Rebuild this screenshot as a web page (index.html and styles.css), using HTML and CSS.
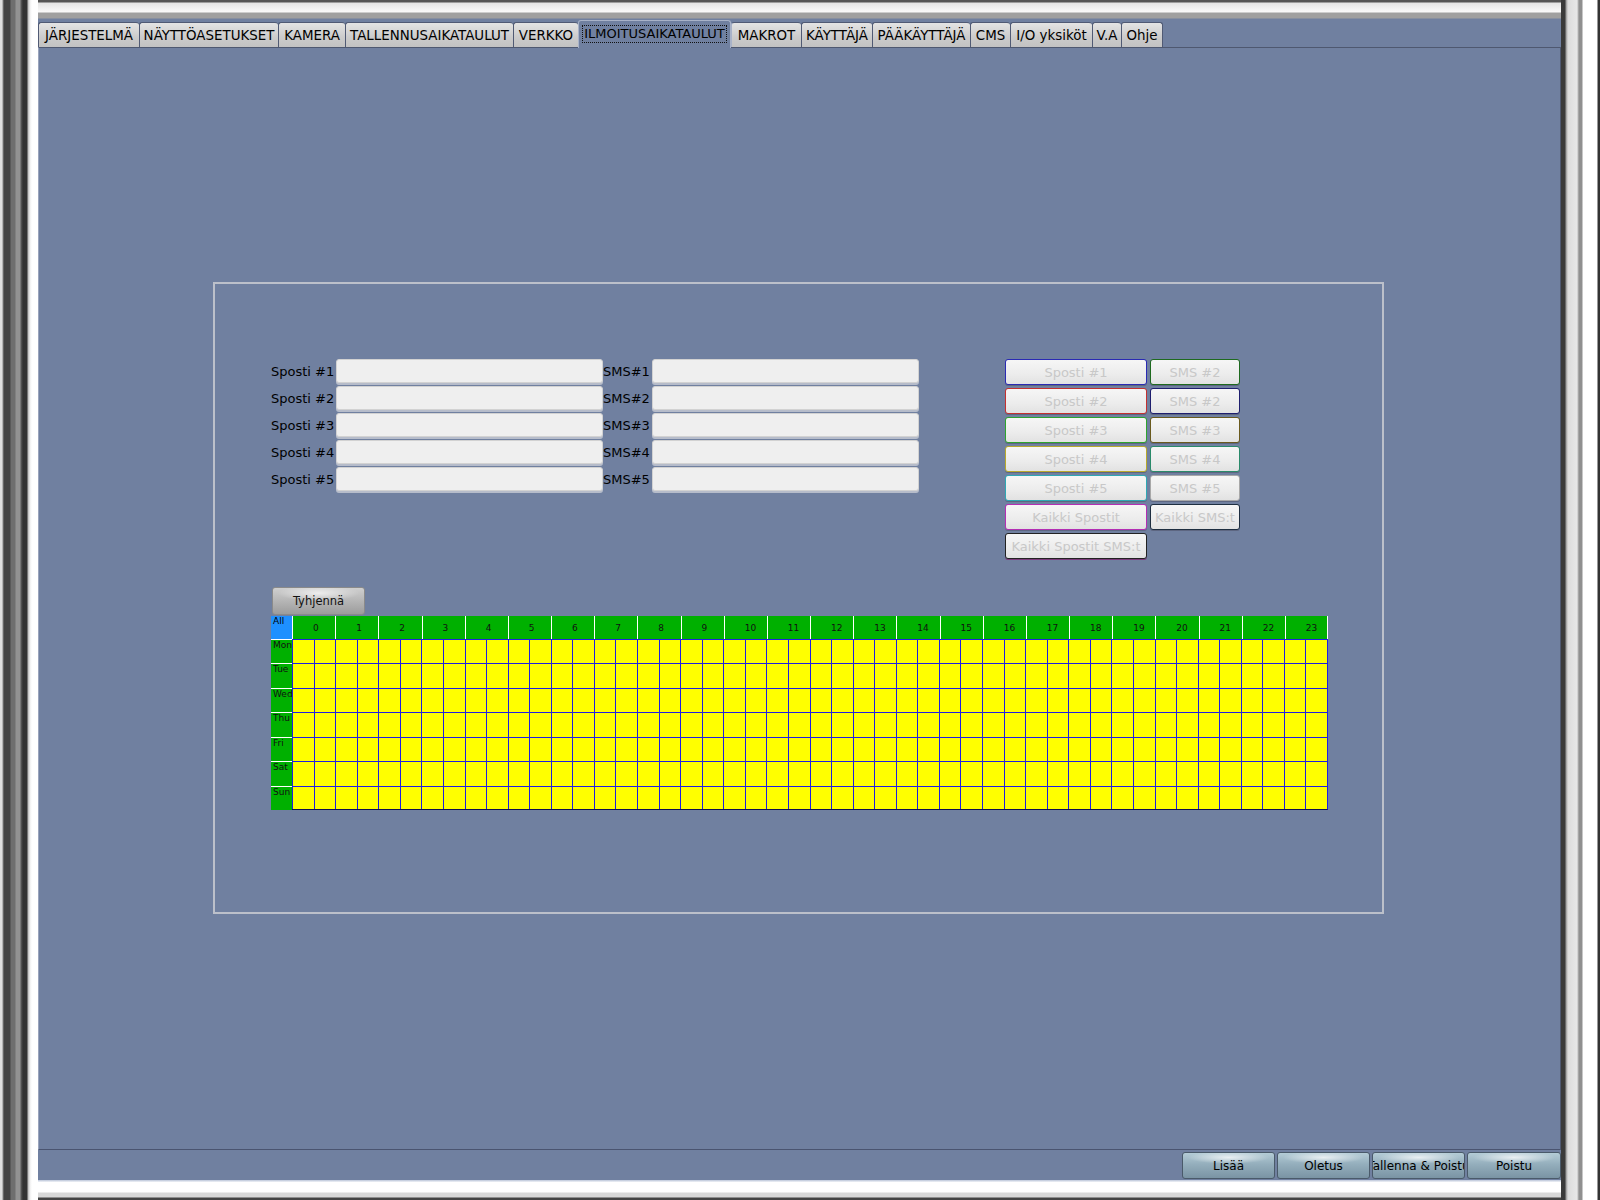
FILE: index.html
```html
<!DOCTYPE html>
<html lang="fi">
<head>
<meta charset="utf-8">
<title>Ilmoitusaikataulut</title>
<link rel="stylesheet" href="styles.css">
</head>
<body>
<div class="frame">
  <div class="window">
    <div class="tabs">
      <div class="tab tab-sys">JÄRJESTELMÄ</div>
      <div class="tab tab-disp">NÄYTTÖASETUKSET</div>
      <div class="tab tab-cam">KAMERA</div>
      <div class="tab tab-rec">TALLENNUSAIKATAULUT</div>
      <div class="tab tab-net">VERKKO</div>
      <div class="tab tab-alarm active"><span class="focus">ILMOITUSAIKATAULUT</span></div>
      <div class="tab tab-macro">MAKROT</div>
      <div class="tab tab-user">KÄYTTÄJÄ</div>
      <div class="tab tab-admin">PÄÄKÄYTTÄJÄ</div>
      <div class="tab tab-cms">CMS</div>
      <div class="tab tab-io">I/O yksiköt</div>
      <div class="tab tab-va">V.A</div>
      <div class="tab tab-help">Ohje</div>
    </div>
    <div class="panel">
      <div class="box">
        <div class="top">
          <div class="form">
            <div class="lbl">Sposti #1</div><div class="field"></div><div class="lbl">SMS#1</div><div class="field"></div>
            <div class="lbl">Sposti #2</div><div class="field"></div><div class="lbl">SMS#2</div><div class="field"></div>
            <div class="lbl">Sposti #3</div><div class="field"></div><div class="lbl">SMS#3</div><div class="field"></div>
            <div class="lbl">Sposti #4</div><div class="field"></div><div class="lbl">SMS#4</div><div class="field"></div>
            <div class="lbl">Sposti #5</div><div class="field"></div><div class="lbl">SMS#5</div><div class="field"></div>
          </div>
          <div class="btns">
            <div class="b c-blue">Sposti #1</div><div class="b c-dgreen">SMS #2</div>
            <div class="b c-red">Sposti #2</div><div class="b c-navy">SMS #2</div>
            <div class="b c-green">Sposti #3</div><div class="b c-olive">SMS #3</div>
            <div class="b c-yellow">Sposti #4</div><div class="b c-teal">SMS #4</div>
            <div class="b c-cyan">Sposti #5</div><div class="b c-gray">SMS #5</div>
            <div class="b c-magenta">Kaikki Spostit</div><div class="b c-slate">Kaikki SMS:t</div>
            <div class="b c-black">Kaikki Spostit SMS:t</div>
          </div>
        </div>
        <div class="clear">Tyhjennä</div>
        <div class="sched">
          <div class="hdr">
            <div class="all">All</div>
            <div class="hr">0</div><div class="hr">1</div><div class="hr">2</div><div class="hr">3</div><div class="hr">4</div><div class="hr">5</div>
            <div class="hr">6</div><div class="hr">7</div><div class="hr">8</div><div class="hr">9</div><div class="hr">10</div><div class="hr">11</div>
            <div class="hr">12</div><div class="hr">13</div><div class="hr">14</div><div class="hr">15</div><div class="hr">16</div><div class="hr">17</div>
            <div class="hr">18</div><div class="hr">19</div><div class="hr">20</div><div class="hr">21</div><div class="hr">22</div><div class="hr">23</div>
          </div>
          <div class="row"><div class="day">Mon</div><div class="cells"><i></i><i></i><i></i><i></i><i></i><i></i><i></i><i></i><i></i><i></i><i></i><i></i><i></i><i></i><i></i><i></i><i></i><i></i><i></i><i></i><i></i><i></i><i></i><i></i><i></i><i></i><i></i><i></i><i></i><i></i><i></i><i></i><i></i><i></i><i></i><i></i><i></i><i></i><i></i><i></i><i></i><i></i><i></i><i></i><i></i><i></i><i></i><i></i></div></div>
          <div class="row"><div class="day">Tue</div><div class="cells"><i></i><i></i><i></i><i></i><i></i><i></i><i></i><i></i><i></i><i></i><i></i><i></i><i></i><i></i><i></i><i></i><i></i><i></i><i></i><i></i><i></i><i></i><i></i><i></i><i></i><i></i><i></i><i></i><i></i><i></i><i></i><i></i><i></i><i></i><i></i><i></i><i></i><i></i><i></i><i></i><i></i><i></i><i></i><i></i><i></i><i></i><i></i><i></i></div></div>
          <div class="row"><div class="day">Wed</div><div class="cells"><i></i><i></i><i></i><i></i><i></i><i></i><i></i><i></i><i></i><i></i><i></i><i></i><i></i><i></i><i></i><i></i><i></i><i></i><i></i><i></i><i></i><i></i><i></i><i></i><i></i><i></i><i></i><i></i><i></i><i></i><i></i><i></i><i></i><i></i><i></i><i></i><i></i><i></i><i></i><i></i><i></i><i></i><i></i><i></i><i></i><i></i><i></i><i></i></div></div>
          <div class="row"><div class="day">Thu</div><div class="cells"><i></i><i></i><i></i><i></i><i></i><i></i><i></i><i></i><i></i><i></i><i></i><i></i><i></i><i></i><i></i><i></i><i></i><i></i><i></i><i></i><i></i><i></i><i></i><i></i><i></i><i></i><i></i><i></i><i></i><i></i><i></i><i></i><i></i><i></i><i></i><i></i><i></i><i></i><i></i><i></i><i></i><i></i><i></i><i></i><i></i><i></i><i></i><i></i></div></div>
          <div class="row"><div class="day">Fri</div><div class="cells"><i></i><i></i><i></i><i></i><i></i><i></i><i></i><i></i><i></i><i></i><i></i><i></i><i></i><i></i><i></i><i></i><i></i><i></i><i></i><i></i><i></i><i></i><i></i><i></i><i></i><i></i><i></i><i></i><i></i><i></i><i></i><i></i><i></i><i></i><i></i><i></i><i></i><i></i><i></i><i></i><i></i><i></i><i></i><i></i><i></i><i></i><i></i><i></i></div></div>
          <div class="row"><div class="day">Sat</div><div class="cells"><i></i><i></i><i></i><i></i><i></i><i></i><i></i><i></i><i></i><i></i><i></i><i></i><i></i><i></i><i></i><i></i><i></i><i></i><i></i><i></i><i></i><i></i><i></i><i></i><i></i><i></i><i></i><i></i><i></i><i></i><i></i><i></i><i></i><i></i><i></i><i></i><i></i><i></i><i></i><i></i><i></i><i></i><i></i><i></i><i></i><i></i><i></i><i></i></div></div>
          <div class="row last"><div class="day">Sun</div><div class="cells"><i></i><i></i><i></i><i></i><i></i><i></i><i></i><i></i><i></i><i></i><i></i><i></i><i></i><i></i><i></i><i></i><i></i><i></i><i></i><i></i><i></i><i></i><i></i><i></i><i></i><i></i><i></i><i></i><i></i><i></i><i></i><i></i><i></i><i></i><i></i><i></i><i></i><i></i><i></i><i></i><i></i><i></i><i></i><i></i><i></i><i></i><i></i><i></i></div></div>
        </div>
      </div>
    </div>
    <div class="footer">
      <div class="fb">Lisää</div>
      <div class="fb">Oletus</div>
      <div class="fb">Tallenna &amp; Poistu</div>
      <div class="fb wide">Poistu</div>
    </div>
  </div>
</div>
</body>
</html>
```
FILE: styles.css
```css
* { box-sizing: border-box; }
html, body { margin: 0; padding: 0; }
body {
  width: 1600px;
  height: 1200px;
  overflow: hidden;
  background: #fff;
  font-family: "DejaVu Sans", "Noto Sans", sans-serif;
  color: #000;
}

.frame {
  width: 1600px;
  height: 1200px;
  padding: 19px 39px 20px 38px;
  background:
    linear-gradient(90deg, #e0e0e0 0, #e0e0e0 2px, #8a8a8a 3px, #444 4px, #444 10px, #6e6e6e 11px, #6e6e6e 15px, #929292 16px, #929292 20px, #5a5a5a 21px, #333 23px, #333 27px, #bbb 28px, #f0f0f0 30px, #fff 32px, #fff 38px) left top / 38px 100% no-repeat,
    linear-gradient(90deg, #3a3a3a 0, #3a3a3a 4px, #999 5px, #dcdcdc 7px, #e8e8e8 16px, #909090 18px, #909090 21px, #fff 22px, #fff 36px, #333 37px) right top / 39px 100% no-repeat,
    linear-gradient(180deg, #555 0, #555 2px, #e4e4e4 3px, #fafafa 12px, #a0a0a0 13px, #a0a0a0 18px, #7080a0 19px) left top / 100% 19px no-repeat,
    linear-gradient(180deg, #c8d0e0 0, #c8d0e0 1px, #fff 2px, #fff 12px, #d8d8d8 13px, #d8d8d8 17px, #444 18px) left bottom / 100% 20px no-repeat,
    #fff;
}

.window {
  width: 1523px;
  height: 1161px;
  background: #7080a0;
  display: flex;
  flex-direction: column;
}

/* tabs */
.tabs {
  height: 28px;
  display: flex;
  align-items: flex-end;
  flex: 0 0 auto;
}
.tab {
  height: 25px;
  border: 1px solid #505a74;
  border-right: none;
  border-bottom: none;
  border-radius: 3px 3px 0 0;
  background: linear-gradient(#e4e4e4, #cbcbcb 60%, #c2c2c2);
  font-size: 13.4px;
  display: flex;
  align-items: center;
  justify-content: center;
  white-space: nowrap;
  flex: 0 0 auto;
}
.tab-help { border-right: 1px solid #505a74; }
.tab.active {
  height: 28px;
  margin-bottom: -1px;
  position: relative;
  z-index: 1;
  background: #7080a0;
  border: 1px solid #a8b2c8;
  border-bottom: none;
  padding-bottom: 2px;
}
.tab.active + .tab { border-left-color: #a8b2c8; }
.focus {
  border: 1px dotted #111;
  padding: 1px 1px;
  line-height: 14px;
  font-size: 13px;
}
.tab-sys { width: 101px; }
.tab-disp { width: 139px; }
.tab-cam { width: 67px; }
.tab-rec { width: 168px; }
.tab-net { width: 65px; }
.tab-alarm { width: 153px; }
.tab-macro { width: 70px; }
.tab-user { width: 71px; }
.tab-admin { width: 98px; }
.tab-cms { width: 40px; }
.tab-io { width: 82px; }
.tab-va { width: 29px; }
.tab-help { width: 42px; }

/* panel */
.panel {
  height: 1103px;
  flex: 0 0 auto;
  border-top: 1px solid #4e5870;
  border-left: 1px solid #9aa4bc;
  border-right: 1px solid #4e5870;
  border-bottom: 1px solid #4a5470;
  padding: 234px 0 0 174px;
}

.box {
  width: 1171px;
  height: 632px;
  border: 2px solid #bcc0ca;
  padding: 75px 0 0 56px;
}

.top {
  display: flex;
  align-items: flex-start;
  height: 200px;
}

.form {
  display: grid;
  grid-template-columns: 65px 267px 49px 267px;
  grid-auto-rows: 24px;
  row-gap: 3px;
}
.lbl {
  font-size: 13px;
  line-height: 25px;
  white-space: nowrap;
}
.field {
  background: #efefef;
  border: 1px solid #d2d2d2;
  border-radius: 3px;
  box-shadow: 0 2px 0 #b6bcca;
}

.btns {
  margin-left: 86px;
  display: grid;
  grid-template-columns: 142px 90px;
  grid-auto-rows: 26px;
  gap: 3px;
}
.b {
  border: 1px solid #888;
  border-radius: 3px;
  background: linear-gradient(#f6f6f6, #ececec 60%, #e2e2e2);
  box-shadow: 0 1px 0 rgba(70, 70, 90, 0.45);
  color: #c8c8c8;
  font-size: 13px;
  display: flex;
  align-items: center;
  justify-content: center;
  white-space: nowrap;
  overflow: hidden;
}
.c-blue { border-color: #2a2ab4; }
.c-red { border-color: #c43030; }
.c-green { border-color: #2ea42e; }
.c-yellow { border-color: #b8aa2c; }
.c-cyan { border-color: #2ea8b4; }
.c-magenta { border-color: #b42eb4; }
.c-black { border-color: #222; box-shadow: 0 1px 0 #7a3a7a; }
.c-dgreen { border-color: #1e6a1e; }
.c-navy { border-color: #1e1e6e; }
.c-olive { border-color: #6a5a1e; }
.c-teal { border-color: #2a8a6a; }
.c-gray { border-color: #a8a8a8; }
.c-slate { border-color: #1e2e40; }

.clear {
  margin: 28px 0 0 1px;
  width: 93px;
  height: 28px;
  border: 1px solid #8a8a8a;
  border-radius: 3px;
  background:
    radial-gradient(ellipse 45% 30% at 50% 20%, rgba(255, 255, 255, 0.7), rgba(255, 255, 255, 0) 100%),
    linear-gradient(#cfcfcf, #b8b8b8 45%, #9c9c9c);
  font-size: 11.5px;
  display: flex;
  align-items: center;
  justify-content: center;
  color: #111;
}

/* schedule grid */
.sched {
  margin-top: 1px;
  width: 1057px;
  height: 194px;
  display: grid;
  grid-template-rows: 23px repeat(7, 1fr);
}
.hdr {
  display: grid;
  grid-template-columns: 21px repeat(24, 1fr);
  background: #00b000;
}
.all {
  background: #1e90ff;
  font-size: 9px;
  line-height: 1;
  padding: 1px 0 0 2px;
}
.hr {
  border-left: 1px solid #fff;
  font-size: 9px;
  padding-left: 20px;
  display: flex;
  align-items: center;
  color: #111;
}
.hr:last-child { border-right: 1px solid #fff; }

.row {
  display: grid;
  grid-template-columns: 21px 1fr;
}
.day {
  background: #00b000;
  border-top: 1px solid #fff;
  font-size: 9px;
  line-height: 1;
  padding: 1px 0 0 2px;
  color: #111;
}
.cells {
  display: grid;
  grid-template-columns: repeat(48, 1fr);
  background: #ffff00;
  border-right: 1px solid #2020e0;
}
.cells i {
  border-left: 1px solid #2020e0;
  border-top: 1px solid #2020e0;
}
.row.last .cells { border-bottom: 1px solid #10104a; }

/* footer */
.footer {
  height: 30px;
  flex: 0 0 auto;
  display: flex;
  justify-content: flex-end;
  gap: 2px;
  padding-top: 2px;
}
.fb {
  width: 93px;
  height: 27px;
  border: 1px solid #4a5a6a;
  border-radius: 3px;
  background:
    radial-gradient(ellipse 45% 25% at 50% 18%, rgba(255, 255, 255, 0.75), rgba(255, 255, 255, 0) 100%),
    linear-gradient(#b4ccd6, #94aebc 45%, #7a94a4);
  font-size: 12px;
  display: flex;
  align-items: center;
  justify-content: center;
  white-space: nowrap;
  overflow: hidden;
}
.fb.wide { width: 94px; }
```
